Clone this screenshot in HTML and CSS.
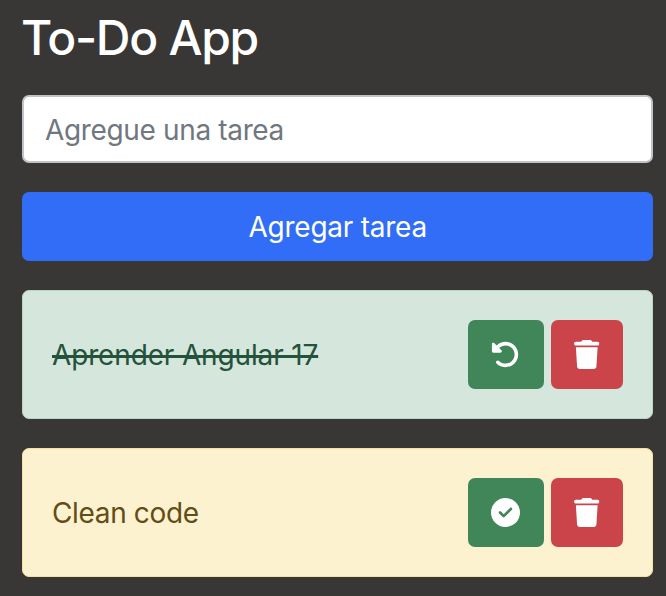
FILE: index.html
```html
<!DOCTYPE html>
<html lang="es">
<head>
<meta charset="utf-8">
<title>To-Do App</title>
<link rel="stylesheet" href="styles.css">
</head>
<body>
<svg class="sprite" aria-hidden="true">
  <symbol id="undo" viewBox="0 0 512 512"><path d="M48.5 224H40c-13.3 0-24-10.7-24-24V72c0-9.700 5.800-18.500 14.800-22.200s19.300-1.700 26.200 5.200L98.600 96.600c87.600-86.500 228.700-86.200 315.800 1c87.500 87.500 87.500 229.300 0 316.800s-229.300 87.500-316.800 0c-12.500-12.500-12.500-32.800 0-45.300s32.800-12.500 45.300 0c62.500 62.500 163.800 62.500 226.300 0s62.500-163.800 0-226.300c-62.200-62.200-162.700-62.500-225.300-1L185 183c6.900 6.900 8.900 17.200 5.200 26.200s-12.500 14.800-22.200 14.800H48.500z"/></symbol>
  <symbol id="check" viewBox="0 0 512 512"><path d="M256 512A256 256 0 1 0 256 0a256 256 0 1 0 0 512zM369 209L241 337c-9.400 9.400-24.600 9.400-33.900 0l-64-64c-9.400-9.400-9.400-24.600 0-33.900s24.600-9.400 33.900 0l47 47L335 175c9.400-9.400 24.600-9.400 33.900 0s9.400 24.600 0 33.900z"/></symbol>
  <symbol id="trash" viewBox="0 0 448 512"><path d="M135.200 17.700L128 32H32C14.300 32 0 46.300 0 64S14.300 96 32 96H416c17.700 0 32-14.300 32-32s-14.300-32-32-32H320l-7.200-14.300C307.400 6.800 296.300 0 284.200 0H163.800c-12.100 0-23.200 6.800-28.600 17.700zM416 128H32L53.200 467c1.600 25.300 22.600 45 47.900 45H346.900c25.300 0 46.300-19.700 47.900-45L416 128z"/></symbol>
</svg>
<main class="app">
  <h1 class="title">To-Do App</h1>
  <input class="field" type="text" placeholder="Agregue una tarea">
  <button class="btn add">Agregar tarea</button>
  <div class="task done">
    <span class="label">Aprender Angular 17</span>
    <div class="actions">
      <button class="btn success" aria-label="Deshacer"><svg class="icon"><use href="#undo"/></svg></button>
      <button class="btn danger" aria-label="Eliminar"><svg class="icon narrow"><use href="#trash"/></svg></button>
    </div>
  </div>
  <div class="task pending">
    <span class="label">Clean code</span>
    <div class="actions">
      <button class="btn success" aria-label="Completar"><svg class="icon"><use href="#check"/></svg></button>
      <button class="btn danger" aria-label="Eliminar"><svg class="icon narrow"><use href="#trash"/></svg></button>
    </div>
  </div>
</main>
</body>
</html>
```
FILE: styles.css
```css
* { box-sizing: border-box; }
body {
  margin: 0;
  height: 596px;
  overflow: hidden;
  background: #393735;
  font: 400 28px/42px Inter, "Liberation Sans", sans-serif;
}
.sprite { display: none; }
.app {
  display: flex;
  flex-direction: column;
  width: 631.4px;
  margin-left: 22px;
  padding-top: 9px;
}
.title {
  margin: 0 0 29px -1px;
  color: #fff;
  font-size: 48px;
  line-height: 57px;
  font-weight: 550;
  letter-spacing: -1.3px;
}
.field {
  height: 68px;
  margin-bottom: 29px;
  padding: 2px 21px 0;
  border: 2px solid #c0c4c8;
  border-radius: 7px;
  background: #fff;
  font: inherit;
  letter-spacing: -0.350px;
}
.field::placeholder { color: #70777e; opacity: 1; }
.btn {
  display: flex;
  align-items: center;
  justify-content: center;
  height: 68.500px;
  padding: 0;
  border: 0;
  border-radius: 7px;
  color: #fff;
  font: inherit;
}
.add {
  margin-bottom: 29px;
  padding-top: 2px;
  background: #316df6;
  letter-spacing: -0.250px;
}
.task {
  display: flex;
  align-items: center;
  justify-content: space-between;
  height: 129.500px;
  margin-bottom: 28.700px;
  padding: 0 29.600px 0 29px;
  border: 1px solid;
  border-radius: 7px;
}
.label { padding-top: 2px; letter-spacing: -0.350px; }
.done { background: #d5e6dd; border-color: #b9d5c5; color: #24523a; }
.done .label {
  letter-spacing: -0.150px;
  text-decoration: line-through;
  text-decoration-thickness: 3px;
}
.pending { background: #fdf2d0; border-color: #f6e29e; color: #614d15; }
.actions { display: flex; gap: 7px; }
.success { width: 76px; background: #418658; }
.danger { width: 72px; background: #ca444a; }
.icon { width: 29px; height: 29px; fill: currentColor; }
.narrow { width: 25.500px; }
```
